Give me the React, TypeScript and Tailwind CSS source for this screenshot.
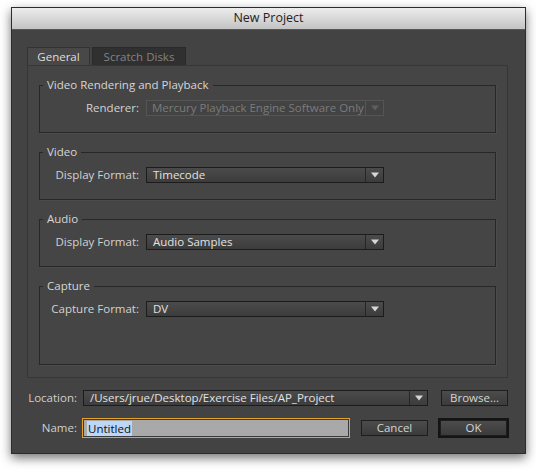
import { ReactNode } from 'react';

const font = { fontFamily: '"Open Sans", "DejaVu Sans", sans-serif' };

function Arrow({ dim }: { dim?: boolean }) {
  return (
    <svg width="8" height="6" viewBox="0 0 8 6">
      <path d="M0 0.5 L8 0.5 L4 5.5 Z" fill={dim ? '#5e5e5e' : '#d6d6d6'} />
    </svg>
  );
}

function Select({ value, width, disabled }: { value: string; width: string; disabled?: boolean }) {
  if (disabled) {
    return (
      <div className={`flex h-[16px] ${width} items-center border border-[#555] bg-[#434343]`}>
        <span className="flex-1 overflow-hidden whitespace-nowrap pl-[5px] text-[11.5px] leading-[14px] text-[#7b7b7b]">
          {value}
        </span>
        <span className="flex h-full w-[18px] shrink-0 items-center justify-center border-l border-[#555]">
          <Arrow dim />
        </span>
      </div>
    );
  }
  return (
    <div
      className={`flex h-[16px] ${width} items-center border border-[#1c1c1c] bg-gradient-to-b from-[#4b4b4b] to-[#3c3c3c]`}
    >
      <span className="flex-1 overflow-hidden whitespace-nowrap pl-[6px] text-[11.5px] leading-[14px] text-[#e2e2e2]">
        {value}
      </span>
      <span className="flex h-full w-[18px] shrink-0 items-center justify-center border-l border-[#262626]">
        <Arrow />
      </span>
    </div>
  );
}

function Group({ title, height, children }: { title: string; height: string; children: ReactNode }) {
  return (
    <div className={`${height} border border-[#272727] shadow-[1px_1px_0_#4c4c4c]`}>
      <div className="-mt-[9px] ml-[3px] w-fit bg-[#454545] px-[4px] text-[11.5px] leading-[16px] text-[#d6d6d6]">
        {title}
      </div>
      <div className="mt-[7px] flex items-center">{children}</div>
    </div>
  );
}

function Row({ label, children }: { label: string; children: ReactNode }) {
  return (
    <>
      <span className="w-[99px] text-right text-[11.5px] leading-[16px] text-[#d2d2d2]">{label}</span>
      <span className="ml-[7px]">{children}</span>
    </>
  );
}

function Button({ label, focused }: { label: string; focused?: boolean }) {
  const inner = (
    <div className="flex h-[16px] w-[67px] items-center justify-center border border-[#1e1e1e] bg-gradient-to-b from-[#4c4c4c] to-[#3b3b3b] text-[11.5px] leading-[14px] text-[#d4d4d4]">
      {label}
    </div>
  );
  if (focused) {
    return <div className="border-2 border-[#141414]">{inner}</div>;
  }
  return inner;
}

export default function App() {
  return (
    <div className="h-[470px] w-[536px] bg-white pl-[11px] pt-[7px]" style={font}>
      <div className="flex h-[447px] w-[515px] flex-col border border-[#2c2c2c] shadow-[0_4px_10px_rgba(0,0,0,0.55)]">
        <div className="flex h-[22px] items-center justify-center border-b border-[#575757] bg-gradient-to-b from-[#ededed] to-[#c3c3c3] text-[12.5px] text-[#222]">
          New Project
        </div>

        <div className="flex flex-1 flex-col bg-[#434343] pl-[15px] pt-[17px]">
          <div className="flex h-[18px] items-end">
            <div className="flex h-[18px] w-[63px] items-center justify-center border border-b-0 border-[#333] bg-[#484848] text-[11.5px] font-medium text-[#dedede]">
              General
            </div>
            <div className="ml-[2px] flex h-[18px] w-[94px] items-center justify-center border border-b-0 border-[#2a2a2a] bg-[#303030] text-[11.5px] text-[#838383]">
              Scratch Disks
            </div>
          </div>

          <div className="flex h-[313px] w-[481px] flex-col border border-[#363636] bg-[#454545] px-[11px] pt-[19px]">
            <Group title="Video Rendering and Playback" height="h-[48px]">
              <Row label="Renderer:">
                <Select value="Mercury Playback Engine Software Only" width="w-[238px]" disabled />
              </Row>
            </Group>
            <div className="h-[19px] shrink-0" />
            <Group title="Video" height="h-[48px]">
              <Row label="Display Format:">
                <Select value="Timecode" width="w-[238px]" />
              </Row>
            </Group>
            <div className="h-[19px] shrink-0" />
            <Group title="Audio" height="h-[48px]">
              <Row label="Display Format:">
                <Select value="Audio Samples" width="w-[238px]" />
              </Row>
            </Group>
            <div className="h-[19px] shrink-0" />
            <Group title="Capture" height="h-[79px]">
              <Row label="Capture Format:">
                <Select value="DV" width="w-[238px]" />
              </Row>
            </Group>
          </div>

          <div className="mt-[12px] flex h-[16px] items-center">
            <span className="w-[50px] text-right text-[11.5px] text-[#cfcfcf]">Location:</span>
            <span className="ml-[6px]">
              <Select value="/Users/jrue/Desktop/Exercise Files/AP_Project" width="w-[345px]" />
            </span>
            <span className="ml-[13px]">
              <Button label="Browse..." />
            </span>
          </div>

          <div className="mt-[12px] flex h-[20px] items-center">
            <span className="w-[50px] text-right text-[11.5px] text-[#cfcfcf]">Name:</span>
            <div className="ml-[5px] flex h-[20px] w-[268px] items-center border border-[#e3a22a] bg-[#a9a9a9] pl-[4px] shadow-[inset_0_0_0_1px_#3a3a3a]">
              <span className="bg-[#bcd6f7] px-[1px] text-[11.5px] leading-[15px] text-[#111]">Untitled</span>
            </div>
            <span className="ml-[11px]">
              <Button label="Cancel" />
            </span>
            <span className="ml-[10px]">
              <Button label="OK" focused />
            </span>
          </div>
        </div>
      </div>
    </div>
  );
}
